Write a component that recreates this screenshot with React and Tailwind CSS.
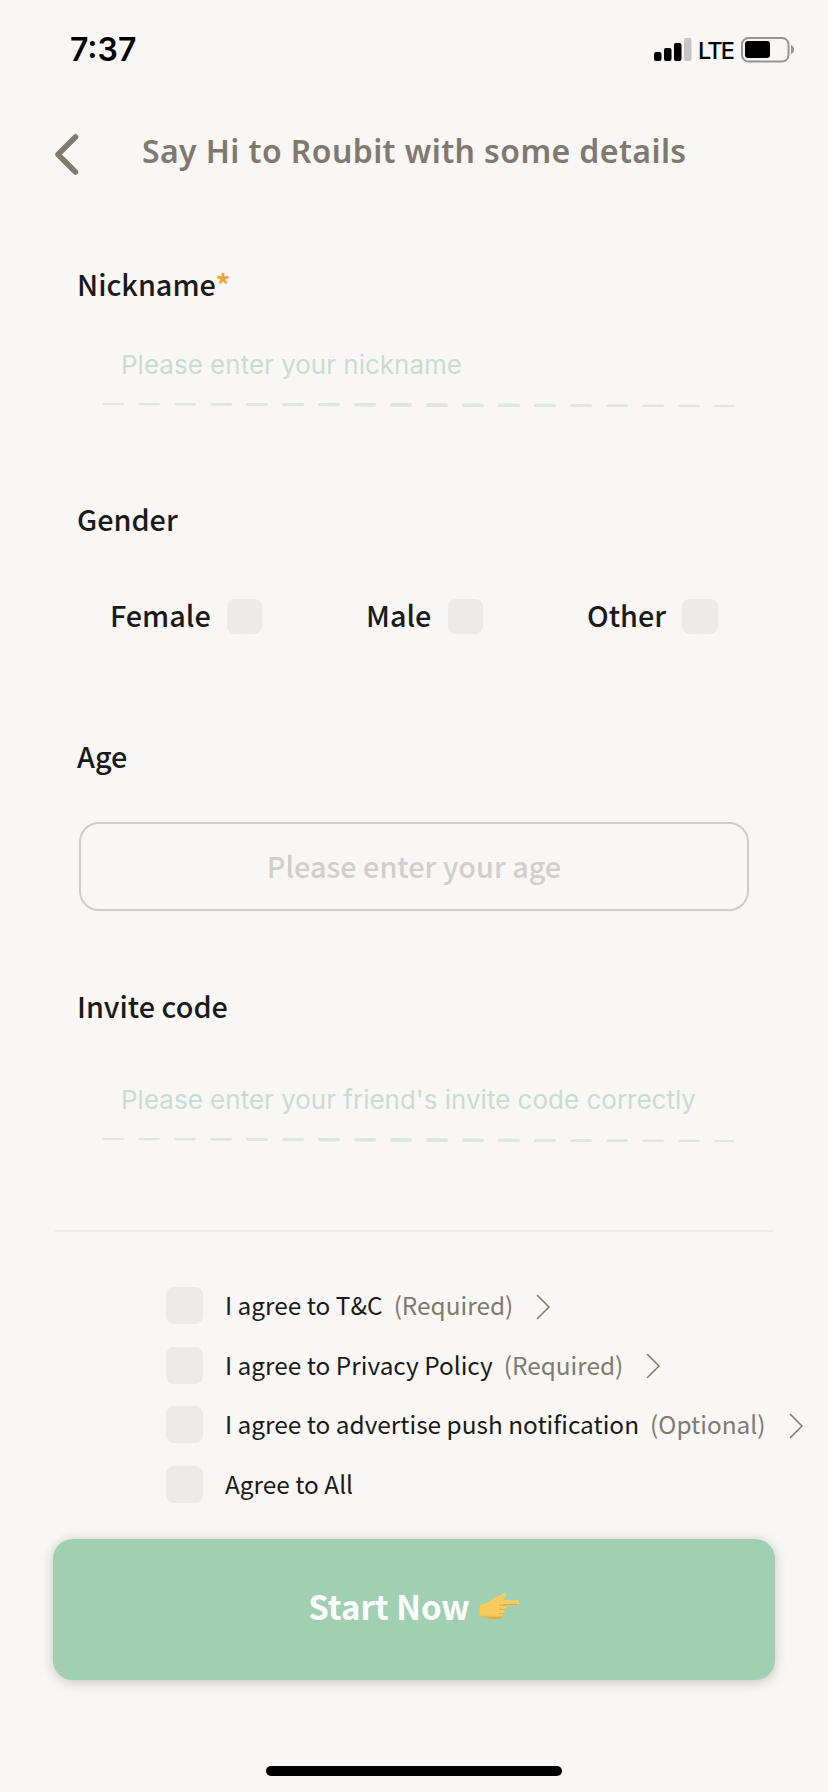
const KR = "font-['Noto_Sans_CJK_KR',sans-serif]"

const GENDERS = [
  { label: 'Female', cls: 'ml-[110px] w-[152px]', box: 'w-[35px]' },
  { label: 'Male', cls: 'ml-[104px] w-[117px]', box: 'w-[35px]' },
  { label: 'Other', cls: 'ml-[104px] w-[131px]', box: 'w-9' },
]

const TERMS = [
  { label: 'I agree to T&C', note: '(Required)' },
  { label: 'I agree to Privacy Policy', note: '(Required)' },
  { label: 'I agree to advertise push notification', note: '(Optional)' },
  { label: 'Agree to All' },
]

function StatusBar() {
  return (
    <div className="flex h-[100px] items-start justify-between pl-[70px] pr-[33px]">
      <span className="mt-[30px] font-['Inter',sans-serif] text-[32px] leading-10 font-semibold text-black">7:37</span>
      <div className="mt-[37px] flex items-start">
        <svg width="38" height="24" viewBox="0 0 38 24">
          <rect x="0" y="15" width="7.5" height="9" rx="2" />
          <rect x="10" y="11" width="7.5" height="13" rx="2" />
          <rect x="20" y="6" width="7.5" height="18" rx="2" />
          <rect x="30" y="1" width="7.5" height="23" rx="2" fill="#c6c5c4" />
        </svg>
        <span className="-mt-[3px] ml-[6px] w-[38px] font-['Inter',sans-serif] text-[23.500px] leading-[34px] font-medium tracking-[-1.800px] text-black">LTE</span>
        <svg className="ml-[5px]" width="54" height="26" viewBox="0 0 54 26">
          <rect x="1" y="1" width="46.5" height="23.5" rx="6.5" fill="none" stroke="#959494" strokeWidth="2" />
          <rect x="4" y="4" width="25" height="17" rx="3" />
          <path d="M50 8c2 .8 3 2.500 3 4.500s-1 3.700-3 4.500z" fill="#959494" />
        </svg>
      </div>
    </div>
  )
}

// Hand-drawn looking underline: slightly slanted and cut by its own box
function DashedLine() {
  return (
    <svg className="ml-[102px] block" width="632" height="4" viewBox="0 0 632 4">
      <line x1="2" y1="0" x2="632" y2="4" stroke="#dfe5e0" strokeWidth="4" strokeLinecap="round" strokeDasharray="18 18" />
    </svg>
  )
}

function Label({ children }) {
  return (
    <h2 className={`${KR} pl-[77px] text-[28.800px] leading-10 font-medium text-[#1a1a1a]`}>{children}</h2>
  )
}

function Placeholder({ children }) {
  return (
    <p className="pl-[121px] font-['Inter',sans-serif] text-[26px] leading-10 whitespace-nowrap text-[#cadbd2]">{children}</p>
  )
}

function PointingHand() {
  return (
    <svg width="41" height="28" viewBox="0 0 41 28">
      <defs>
        <linearGradient id="skin" x1="0" y1="0" x2="0" y2="1">
          <stop offset="0" stopColor="#f8cf62" />
          <stop offset="0.85" stopColor="#f8ca5c" />
          <stop offset="1" stopColor="#d99a35" />
        </linearGradient>
      </defs>
      <path
        d="M1 13.500C3 11.800 6 11.200 9 10.200C12 9 14 6.300 17 5.100C20 4.100 22 3.400 23.500 1.800C24.800 .4 27 1 27.200 2.800C27.400 5 25.500 6.600 23.500 8.300L38 8.400C41.300 8.700 41.200 12.600 38 12.800L26 13.500C27 14.600 26.800 16.500 25.500 17.500C26.200 19.200 25.700 20.700 24.500 21.700C24.800 24.500 22.500 26.800 19 26.900C14.500 27.300 10 26.800 7 25.500C5 24.900 3.200 25.700 1.500 25C.2 21.500 .3 17 1 13.500Z"
        fill="url(#skin)"
      />
      <path d="M26 13.500L20.500 13.300M25.500 17.500L20.500 17.300M24.500 21.700L20 21.300" stroke="#dba43e" strokeWidth="0.800" strokeLinecap="round" fill="none" />
      <path d="M24 12.700L38 12.300" stroke="#dda23a" strokeWidth="0.900" strokeLinecap="round" />
    </svg>
  )
}

export default function App() {
  return (
    <div className="flex h-[1792px] w-[828px] flex-col overflow-hidden bg-[#f8f7f5]">
      <StatusBar />

      {/* Header */}
      <header className="flex h-[108px] items-start">
        <svg className="mt-[33px] ml-[54px]" width="26" height="43" viewBox="0 0 26 43">
          <path d="M21.500 4L4 21.500L21.500 39" fill="none" stroke="#807970" strokeWidth="5.500" strokeLinecap="round" strokeLinejoin="round" />
        </svg>
        <h1 className="mt-[27px] ml-[62px] font-['Noto_Sans',sans-serif] text-[32px] leading-[48px] font-semibold tracking-[0.400px] whitespace-nowrap text-[#807970]">
          Say Hi to Roubit with some details
        </h1>
      </header>

      {/* Nickname */}
      <section className="h-[235px] pt-[56px]">
        <Label>
          Nickname<span className="font-bold text-[#f2a33a]">*</span>
        </Label>
        <div className="mt-[41px] mb-[18px]">
          <Placeholder>Please enter your nickname</Placeholder>
        </div>
        <DashedLine />
      </section>

      {/* Gender */}
      <section className="h-[235px] pt-[56px]">
        <Label>Gender</Label>
        <div className="mt-[59px] flex items-center">
          {GENDERS.map(({ label, cls, box }) => (
            <div key={label} className={`${cls} flex items-center justify-between`}>
              <span className={`${KR} -mt-[3px] text-[28.800px] leading-10 font-medium text-[#1a1a1a]`}>{label}</span>
              <span className={`${box} h-[35px] shrink-0 rounded-lg bg-[#ebeae6]`} />
            </div>
          ))}
        </div>
      </section>

      {/* Age */}
      <section className="h-[235px] pt-[58px]">
        <Label>Age</Label>
        <div className={`${KR} mt-[46px] ml-[79px] flex h-[89px] w-[670px] items-center justify-center rounded-[20px] border-2 border-[#cecdca] pb-px text-[28.800px] font-medium text-[#d0cfcb]`}>
          Please enter your age
        </div>
      </section>

      {/* Invite code */}
      <section className="h-[317px] pt-[73px]">
        <Label>Invite code</Label>
        <div className="mt-[54px] mb-[18px]">
          <Placeholder>Please enter your friend's invite code correctly</Placeholder>
        </div>
        <DashedLine />
      </section>

      {/* Terms */}
      <section className="mx-[55px] h-[309px] border-t-2 border-[#ebebe8] pt-[43.400px] pl-[111px]">
        {TERMS.map(({ label, note }) => (
          <div key={label} className={`${KR} flex h-[59.600px] items-center text-[24.400px] leading-9 whitespace-nowrap`}>
            <span className="mt-px h-[37px] w-[37px] shrink-0 rounded-lg bg-[#ebeae6]" />
            <span className="ml-[22px] text-[#1a1a1a]">{label}</span>
            {note && (
              <>
                <span className="ml-[11px] text-[#807970]">{note}</span>
                <svg className="mt-[3px] ml-[23px] shrink-0" width="15" height="26" viewBox="0 0 15 26">
                  <path d="M1.500 1.500L13 13L1.500 24.500" fill="none" stroke="#807970" strokeWidth="1.500" strokeLinecap="round" />
                </svg>
              </>
            )}
          </div>
        ))}
      </section>

      <button className={`${KR} mx-[53px] flex h-[141px] shrink-0 items-center justify-center rounded-[20px] bg-[#a0cfb2] pb-2 text-[33px] leading-[50px] font-bold text-white shadow-[0_2px_12px_rgba(60,40,30,0.25)]`}>
        <span className="mr-[9px]">Start Now</span>
        <PointingHand />
      </button>

      {/* Home indicator */}
      <div className="mt-[86px] h-2.5 w-[296px] shrink-0 self-center rounded-full bg-black" />
    </div>
  )
}
